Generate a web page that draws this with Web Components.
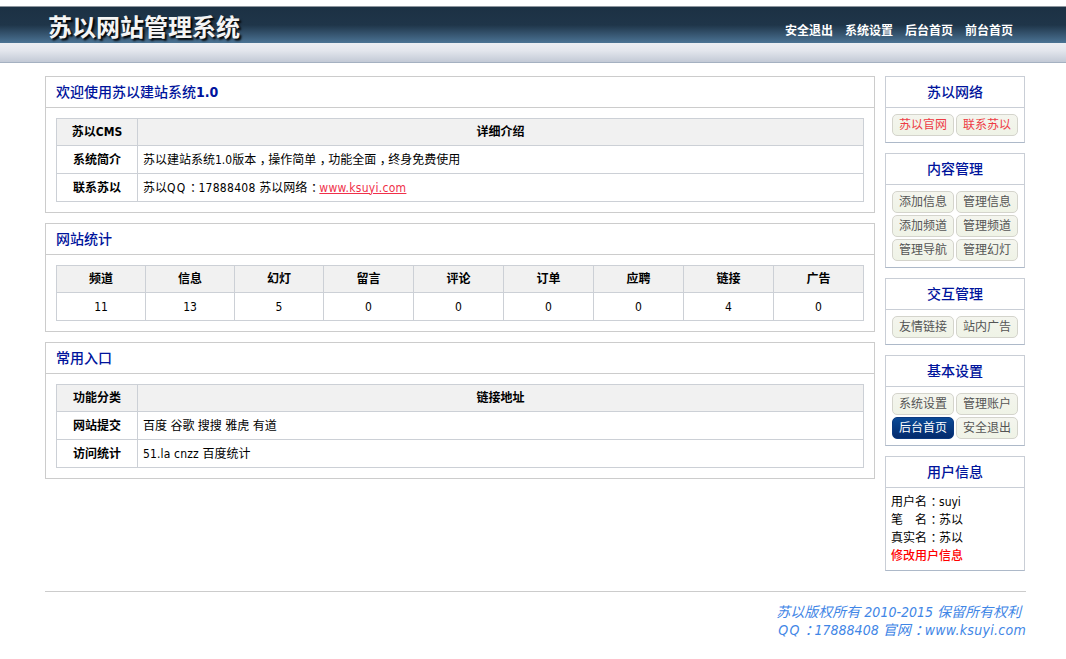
<!DOCTYPE html>
<html lang="zh">
<head>
<meta charset="utf-8">
<title>苏以网站管理系统</title>
<style>
  html, body { margin: 0; background: #fff; }
  body {
    font: 12px/18px "DejaVu Sans", "Noto Sans CJK SC", sans-serif;
    font-stretch: condensed;
    color: #000;
  }
  /* fullwidth punctuation sits in the middle of its cell in the reference */
  .p { padding-left: .3em; letter-spacing: -.3em; }
  .w { letter-spacing: .28px; }
  .q { letter-spacing: 1.2px; }
</style>
</head>
<body>
<admin-header logo="苏以网站管理系统">
  <span>安全退出</span><span>系统设置</span><span>后台首页</span><span>前台首页</span>
</admin-header>

<admin-layout>
  <info-panel slot="main">
    <span slot="heading">欢迎使用苏以建站系统<b>1.0</b></span>
    <data-table cols="81px 1fr">
      <t-cell head>苏以CMS</t-cell><t-cell head>详细介绍</t-cell>
      <t-cell label>系统简介</t-cell><t-cell>苏以建站系统1.0版本<span class="p">，</span>操作简单<span class="p">，</span>功能全面<span class="p">，</span>终身免费使用</t-cell>
      <t-cell label>联系苏以</t-cell><t-cell>苏以<span class="q">QQ</span><span class="p">：</span><span class="w">17888408 </span>苏以网络<span class="p">：</span><a class="w" href="#" style="color:#f0304a">www.ksuyi.com</a></t-cell>
    </data-table>
  </info-panel>
  <info-panel slot="main">
    <span slot="heading">网站统计</span>
    <data-table cols="89px 89px 89px 90px 90px 90px 90px 90px 1fr">
      <t-cell head>频道</t-cell><t-cell head>信息</t-cell><t-cell head>幻灯</t-cell><t-cell head>留言</t-cell><t-cell head>评论</t-cell><t-cell head>订单</t-cell><t-cell head>应聘</t-cell><t-cell head>链接</t-cell><t-cell head>广告</t-cell>
      <t-cell num>11</t-cell><t-cell num>13</t-cell><t-cell num>5</t-cell><t-cell num>0</t-cell><t-cell num>0</t-cell><t-cell num>0</t-cell><t-cell num>0</t-cell><t-cell num>4</t-cell><t-cell num>0</t-cell>
    </data-table>
  </info-panel>
  <info-panel slot="main">
    <span slot="heading">常用入口</span>
    <data-table cols="81px 1fr">
      <t-cell head>功能分类</t-cell><t-cell head>链接地址</t-cell>
      <t-cell label>网站提交</t-cell><t-cell>百度 谷歌 搜搜 雅虎 有道</t-cell>
      <t-cell label>访问统计</t-cell><t-cell><span style="letter-spacing:.15px">51.la cnzz </span>百度统计</t-cell>
    </data-table>
  </info-panel>

  <side-box slot="side" heading="苏以网络">
    <side-btn tone="red">苏以官网</side-btn><side-btn tone="red">联系苏以</side-btn>
  </side-box>
  <side-box slot="side" heading="内容管理">
    <side-btn>添加信息</side-btn><side-btn>管理信息</side-btn>
    <side-btn>添加频道</side-btn><side-btn>管理频道</side-btn>
    <side-btn>管理导航</side-btn><side-btn>管理幻灯</side-btn>
  </side-box>
  <side-box slot="side" heading="交互管理">
    <side-btn>友情链接</side-btn><side-btn>站内广告</side-btn>
  </side-box>
  <side-box slot="side" heading="基本设置">
    <side-btn>系统设置</side-btn><side-btn>管理账户</side-btn>
    <side-btn tone="active">后台首页</side-btn><side-btn>安全退出</side-btn>
  </side-box>
  <side-box slot="side" heading="用户信息" plain>
    <div>用户名<span class="p">：</span>suyi</div>
    <div>笔　名<span class="p">：</span>苏以</div>
    <div>真实名<span class="p">：</span>苏以</div>
    <div style="color:#f00;font-weight:500">修改用户信息</div>
  </side-box>
</admin-layout>

<admin-footer>
  <span style="padding-right:5px">苏以版权所有 2010-2015 保留所有权利</span>
  <span><span class="q">QQ</span><span class="p">：</span>17888408 官网<span class="p">：</span><span class="w">www.ksuyi.com</span></span>
</admin-footer>

<script>
class AdminHeader extends HTMLElement {
  connectedCallback() {
    this.attachShadow({ mode: "open" }).innerHTML = `
    <style>
      :host { display: block; margin-top: 6px; }
      #bar {
        height: 36px;
        border-top: 1px solid #8d969e;
        background: linear-gradient(#1c3144 0, #1f3549 50%, #4b7394 100%);
        display: flex;
        justify-content: space-between;
        padding: 0 53px 0 48px;
      }
      #logo {
        font-size: 24px;
        line-height: 30px;
        margin-top: 6px;
        font-weight: 700;
        color: #f4f4f4;
        text-shadow: 2px 2px 2px #000;
      }
      nav {
        display: flex;
        gap: 12px;
        align-items: center;
        padding-top: 12px;
        color: #fff;
        font-weight: 700;
      }
      #strip {
        height: 19px;
        background: linear-gradient(#eceef3, #e3e6ed 40%, #c3cad6);
        border-bottom: 1px solid #a5b1c1;
      }
    </style>
    <div id="bar">
      <div id="logo">${this.getAttribute("logo")}</div>
      <nav><slot></slot></nav>
    </div>
    <div id="strip"></div>
    `;
  }
}

class AdminLayout extends HTMLElement {
  connectedCallback() {
    this.attachShadow({ mode: "open" }).innerHTML = `
    <style>
      :host {
        display: grid;
        grid-template-columns: 830px 140px;
        gap: 10px;
        padding: 13px 0 0 45px;
      }
      .col { display: flex; flex-direction: column; gap: 10px; }
    </style>
    <div class="col"><slot name="main"></slot></div>
    <div class="col"><slot name="side"></slot></div>
    `;
  }
}

class InfoPanel extends HTMLElement {
  connectedCallback() {
    this.attachShadow({ mode: "open" }).innerHTML = `
    <style>
      :host { display: block; border: 1px solid #ccc; }
      h2 {
        margin: 0;
        height: 30px;
        border-bottom: 1px solid #ccc;
        padding-left: 10px;
        font-size: 14px;
        font-weight: 500;
        line-height: 30px;
        color: #00149c;
      }
      #body { padding: 10px; }
    </style>
    <h2><slot name="heading"></slot></h2>
    <div id="body"><slot></slot></div>
    `;
  }
}

class DataTable extends HTMLElement {
  connectedCallback() {
    this.attachShadow({ mode: "open" }).innerHTML = `
    <style>
      :host {
        display: grid;
        grid-template-columns: ${this.getAttribute("cols")};
        border-top: 1px solid #ccd0d6;
        border-left: 1px solid #ccd0d6;
      }
    </style>
    <slot></slot>
    `;
  }
}

class TCell extends HTMLElement {
  connectedCallback() {
    this.attachShadow({ mode: "open" }).innerHTML = `
    <style>
      :host {
        display: flex;
        align-items: center;
        box-sizing: border-box;
        height: 28px;
        padding: 0 5px;
        border-right: 1px solid #ccd0d6;
        border-bottom: 1px solid #ccd0d6;
        white-space: pre;
      }
      :host([head]) {
        height: 27px;
        justify-content: center;
        font-weight: 700;
        background: #f1f1f1;
      }
      :host([label]) { justify-content: center; font-weight: 700; }
      :host([num]) { justify-content: center; }
    </style>
    <span><slot></slot></span>
    `;
  }
}

class SideBox extends HTMLElement {
  connectedCallback() {
    this.attachShadow({ mode: "open" }).innerHTML = `
    <style>
      :host {
        display: block;
        border: 1px solid #c9ced6;
        border-bottom-color: #adb9c9;
      }
      h3 {
        margin: 0;
        height: 30px;
        border-bottom: 1px solid #c9ced6;
        text-align: center;
        font-size: 14px;
        font-weight: 500;
        line-height: 30px;
        color: #00149c;
      }
      #body {
        display: grid;
        grid-template-columns: 62px 62px;
        gap: 2px;
        padding: 6px;
      }
      :host([plain]) #body { display: block; padding: 5px; }
    </style>
    <h3>${this.getAttribute("heading")}</h3>
    <div id="body"><slot></slot></div>
    `;
  }
}

class SideBtn extends HTMLElement {
  connectedCallback() {
    this.attachShadow({ mode: "open" }).innerHTML = `
    <style>
      :host {
        display: block;
        box-sizing: border-box;
        height: 22px;
        line-height: 20px;
        text-align: center;
        border: 1px solid #d4d4cc;
        border-radius: 5px;
        background: linear-gradient(#f4f5ee, #eff3e6);
        color: #555;
      }
      :host([tone="red"]) { color: #ee3b45; }
      :host([tone="active"]) {
        color: #fff;
        border-color: #0b3a80;
        background: linear-gradient(#0a4a96, #032a6c);
      }
    </style>
    <slot></slot>
    `;
  }
}

class AdminFooter extends HTMLElement {
  connectedCallback() {
    this.attachShadow({ mode: "open" }).innerHTML = `
    <style>
      :host {
        display: flex;
        flex-direction: column;
        align-items: flex-end;
        width: 981px;
        margin: 20px 0 0 45px;
        padding-top: 11px;
        font-size: 14px;
        line-height: 18px;
        font-style: italic;
        color: #3f86e6;
        border-top: 1px solid;
        border-image: linear-gradient(to right, #ccc 980px, transparent 980px) 1;
      }
    </style>
    <slot></slot>
    `;
  }
}

customElements.define("admin-header", AdminHeader);
customElements.define("admin-layout", AdminLayout);
customElements.define("info-panel", InfoPanel);
customElements.define("data-table", DataTable);
customElements.define("t-cell", TCell);
customElements.define("side-box", SideBox);
customElements.define("side-btn", SideBtn);
customElements.define("admin-footer", AdminFooter);
</script>
</body>
</html>
